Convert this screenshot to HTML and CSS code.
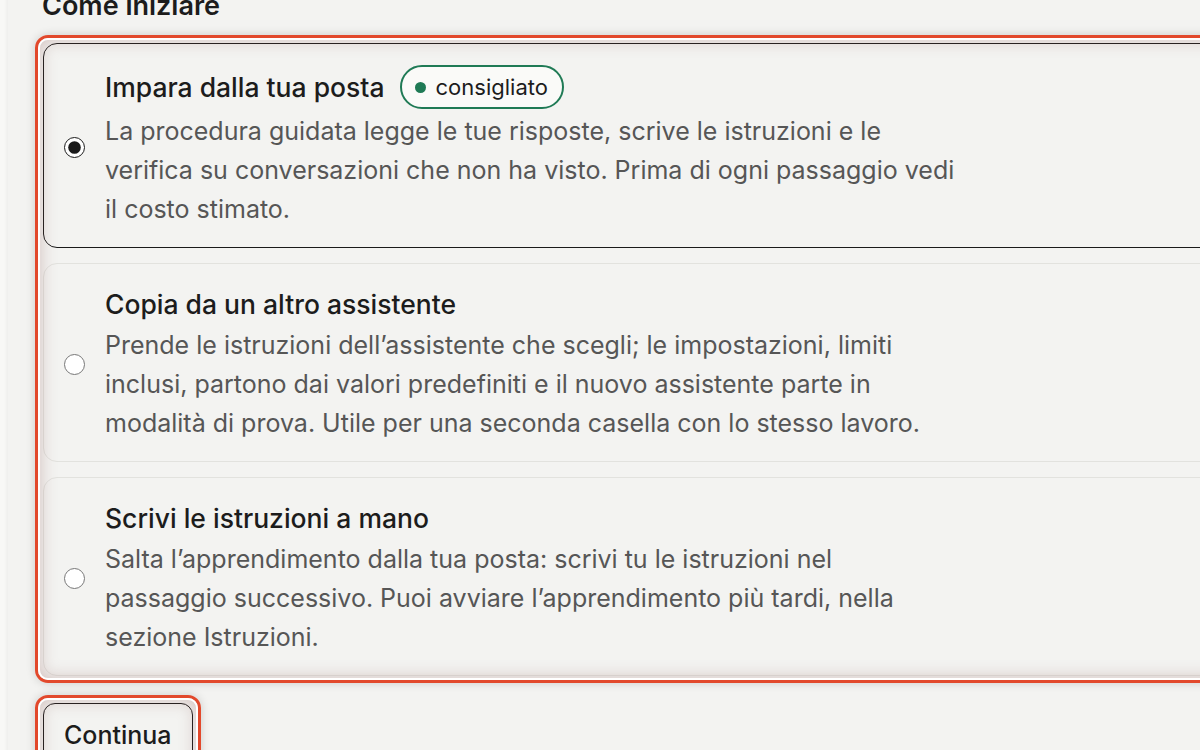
FILE: index.html
```html
<!DOCTYPE html>
<html lang="it">
<head>
  <meta charset="UTF-8">
  <meta name="viewport" content="width=device-width, initial-scale=1.0">
  <title>Nuovo assistente – Come iniziare</title>
  <link rel="stylesheet" href="styles.css">
</head>
<body>

  <main class="page">
    <h2 class="section-title">Come iniziare</h2>

    <div class="highlight options">
      <label class="option selected">
        <input type="radio" name="start" value="learn" checked>
        <span class="option-body">
          <span class="option-title">Impara dalla tua posta <span class="badge"><span class="dot"></span>consigliato</span></span>
          <span class="option-desc">La procedura guidata legge le tue risposte, scrive le istruzioni e le verifica su conversazioni che non ha visto. Prima di ogni passaggio vedi il costo stimato.</span>
        </span>
      </label>

      <label class="option">
        <input type="radio" name="start" value="copy">
        <span class="option-body">
          <span class="option-title">Copia da un altro assistente</span>
          <span class="option-desc">Prende le istruzioni dell’assistente che scegli; le impostazioni, limiti inclusi, partono dai valori predefiniti e il nuovo assistente parte in modalità di prova. Utile per una seconda casella con lo stesso lavoro.</span>
        </span>
      </label>

      <label class="option">
        <input type="radio" name="start" value="manual">
        <span class="option-body">
          <span class="option-title">Scrivi le istruzioni a mano</span>
          <span class="option-desc">Salta l’apprendimento dalla tua posta: scrivi tu le istruzioni nel passaggio successivo. Puoi avviare l’apprendimento più tardi, nella sezione Istruzioni.</span>
        </span>
      </label>
    </div>

    <div class="highlight actions">
      <button class="btn">Continua</button>
    </div>
  </main>

</body>
</html>
```

FILE: styles.css
```css
html, body {
  margin: 0;
  padding: 0;
}

body {
  font-family: 'Inter', 'Noto Sans', sans-serif;
  background: #f8f8f6;
  color: #1c1c1c;
  overflow: hidden;
  height: 750px;
}

.page {
  margin-left: 8px;
  padding-left: 27px;
  background: #f3f3f1;
  min-height: 800px;
  box-shadow: -1px 0 4px rgba(0, 0, 0, 0.06);
}

.section-title {
  margin: -10px 0 14px 7px;
  font-size: 27px;
  line-height: 31px;
  font-weight: 600;
  color: #1c1c1c;
}

/* red highlight frame */
.highlight {
  position: relative;
  border: 3px solid #e2492c;
  border-radius: 13px;
  padding: 5px;
  box-shadow: 0 0 10px rgba(0, 0, 0, 0.16);
}

.highlight::after {
  content: '';
  position: absolute;
  inset: 0;
  border-radius: 10px;
  pointer-events: none;
  box-shadow: inset 0 0 0 2px #fff, inset 0 0 16px 3px rgba(150, 100, 95, 0.32);
}

.options {
  width: 1250px;
  padding-bottom: 4px;
  display: flex;
  flex-direction: column;
  gap: 15px;
}

.option {
  display: flex;
  align-items: center;
  gap: 20px;
  padding: 21px 24px 18px 20px;
  border: 1px solid #e2e2de;
  border-radius: 14px;
  background: #f3f3f1;
  cursor: pointer;
}

.option.selected {
  border-color: #1a1a1a;
}

.option input {
  flex: none;
  width: 21px;
  height: 21px;
  margin: 0;
  accent-color: #1a1a1a;
}

.option-body {
  display: flex;
  flex-direction: column;
}

.option-title {
  display: flex;
  align-items: center;
  gap: 15px;
  min-height: 38px;
  font-size: 26.5px;
  font-weight: 500;
  color: #1c1c1c;
}

.option-desc {
  margin-top: 3px;
  max-width: 860px;
  font-size: 25px;
  line-height: 39px;
  color: #565656;
  text-wrap: pretty;
}

.badge {
  display: inline-flex;
  align-items: center;
  gap: 10px;
  height: 40px;
  padding: 0 14px 0 13px;
  border: 2px solid #1f7a55;
  border-radius: 22px;
  background: #fafaf8;
  font-size: 22px;
  font-weight: 400;
  color: #1c1c1c;
}

.badge .dot {
  width: 11px;
  height: 11px;
  border-radius: 50%;
  background: #1f7a55;
}

.actions {
  display: inline-block;
  margin-top: 12px;
}

.btn {
  font-family: inherit;
  font-size: 25px;
  font-weight: 500;
  line-height: 30px;
  color: #1c1c1c;
  background: #f3f3f1;
  border: 1px solid #1a1a1a;
  border-radius: 12px;
  padding: 16px 20px;
  cursor: pointer;
}
```
